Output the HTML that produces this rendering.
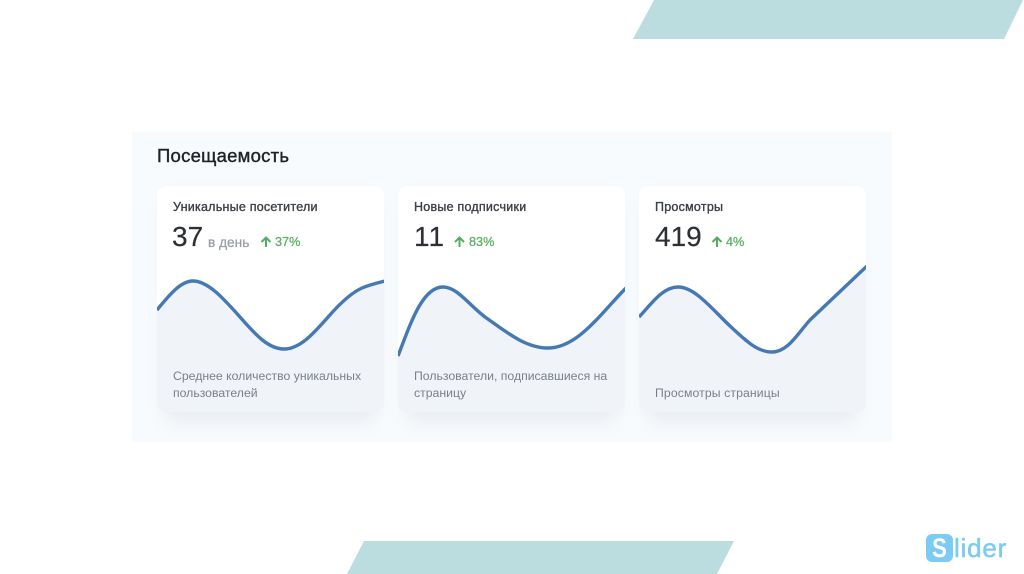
<!DOCTYPE html>
<html lang="ru">
<head>
<meta charset="utf-8">
<style>
html,body{margin:0;padding:0;background:#fff}
body{width:1024px;height:574px;overflow:hidden;position:relative;font-family:"Liberation Sans",sans-serif}
.abs{position:absolute;white-space:nowrap}
svg.bg{position:absolute;left:0;top:0}
.t{font-size:12.5px;letter-spacing:.24px;-webkit-text-stroke:.35px #3c4046;color:#3c4046;line-height:16px}
.n{font-size:28px;color:#2c2f33;line-height:32px;-webkit-text-stroke:.2px #2c2f33}
.d{font-size:13.700px;-webkit-text-stroke:.3px #9a9ea6;color:#9a9ea6;line-height:16px}
.p{font-size:12.700px;-webkit-text-stroke:.3px #5cb163;color:#5cb163;line-height:16px}
.f{font-size:12.25px;color:#7b8088;line-height:18px}
</style>
</head>
<body>
<svg class="bg" width="1024" height="574" viewBox="0 0 1024 574">
<defs>
<filter id="s" x="-25%" y="-25%" width="150%" height="150%"><feGaussianBlur stdDeviation="9"/></filter>
<clipPath id="c1"><rect x="157" y="186" width="227" height="226" rx="9"/></clipPath>
<clipPath id="c2"><rect x="398" y="186" width="227" height="226" rx="9"/></clipPath>
<clipPath id="c3"><rect x="639" y="186" width="227" height="226" rx="9"/></clipPath>
</defs>
<polygon points="654,0 1023,0 1004,39 633,39" fill="#bbdddf"/>
<polygon points="364,541 734,541 717,574 347,574" fill="#bbdddf"/>
<rect x="132" y="132" width="760" height="310" fill="#f8fbfd"/>
<g fill="#e8edf2" filter="url(#s)">
<rect x="165" y="196" width="211" height="226" rx="9"/>
<rect x="406" y="196" width="211" height="226" rx="9"/>
<rect x="647" y="196" width="211" height="226" rx="9"/>
</g>
<g clip-path="url(#c1)">
<rect x="157" y="186" width="227" height="226" fill="#fff"/>
<path d="M157 310C170 294 181 281 193 281C208 281 224 299 240 317C255 334 268 349 284 349C300 349 314 333 329 316C343 300 353 292 362 288C370 284.500 377 283 385 281V412H157Z" fill="#f0f3f7"/>
<path d="M157 310C170 294 181 281 193 281C208 281 224 299 240 317C255 334 268 349 284 349C300 349 314 333 329 316C343 300 353 292 362 288C370 284.500 377 283 385 281" fill="none" stroke="#4579b4" stroke-width="3.4"/>
</g>
<g clip-path="url(#c2)">
<rect x="398" y="186" width="227" height="226" fill="#fff"/>
<path d="M398 356C410 325 422 287 443 287C457 287 468 304 485 317C505 331 525 348 548 348C578 348 602 312 626 288V412H398Z" fill="#f0f3f7"/>
<path d="M398 356C410 325 422 287 443 287C457 287 468 304 485 317C505 331 525 348 548 348C578 348 602 312 626 288" fill="none" stroke="#4579b4" stroke-width="3.4"/>
</g>
<g clip-path="url(#c3)">
<rect x="639" y="186" width="227" height="226" fill="#fff"/>
<path d="M639 317C652 303 663 287 678 287C695 287 712 309 730 326C745 340 757 352 772 352C788 352 798 333 810 320L867 266V412H639Z" fill="#f0f3f7"/>
<path d="M639 317C652 303 663 287 678 287C695 287 712 309 730 326C745 340 757 352 772 352C788 352 798 333 810 320L867 266" fill="none" stroke="#4579b4" stroke-width="3.4"/>
</g>
<g fill="none" stroke="#55ad5c" stroke-width="2">
<path d="M266 247V238M261.500 242L266 237.500L270.500 242"/>
<path d="M459.500 247V238M455 242L459.500 237.500L464 242"/>
<path d="M717 247V238M712.500 242L717 237.500L721.500 242"/>
</g>
<rect x="926" y="534" width="27" height="28" rx="6" fill="#7ccbf3"/>
</svg>

<div class="abs" style="left:157px;top:145px;font-size:18.5px;letter-spacing:.25px;-webkit-text-stroke:.4px #1f2226;color:#1f2226;line-height:22px;">Посещаемость</div>

<div class="abs t" style="left:173px;top:199px">Уникальные посетители</div>
<div class="abs n" style="left:172px;top:221px">37</div>
<div class="abs d" style="left:208px;top:235px">в день</div>
<div class="abs p" style="left:275px;top:234px">37%</div>
<div class="abs f" style="left:173px;top:367px">Среднее количество уникальных</div>
<div class="abs f" style="left:173px;top:384px">пользователей</div>

<div class="abs t" style="left:414px;top:199px">Новые подписчики</div>
<div class="abs n" style="left:414px;top:221px;letter-spacing:1px">11</div>
<div class="abs p" style="left:469px;top:234px">83%</div>
<div class="abs f" style="left:414px;top:367px">Пользователи, подписавшиеся на</div>
<div class="abs f" style="left:414px;top:384px">страницу</div>

<div class="abs t" style="left:655px;top:199px">Просмотры</div>
<div class="abs n" style="left:655px;top:221px">419</div>
<div class="abs p" style="left:726px;top:234px">4%</div>
<div class="abs f" style="left:655px;top:384px;letter-spacing:.1px">Просмотры страницы</div>

<div class="abs" style="left:926px;top:534px;width:27px;text-align:center;font-size:27px;font-weight:700;color:#fff;line-height:28px;transform:scaleX(.82)">S</div>
<div class="abs" style="left:954px;top:533px;font-size:26px;-webkit-text-stroke:.5px #7ccbf3;color:#7ccbf3;line-height:30px;letter-spacing:.8px">lider</div>
</body>
</html>
